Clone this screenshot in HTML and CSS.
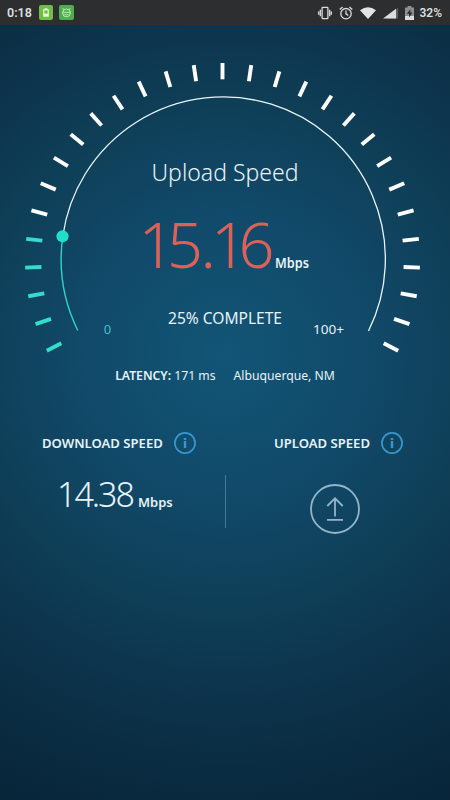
FILE: index.html
```
<!DOCTYPE html>
<html lang="en">

<head>
    <meta charset="UTF-8">
    <meta name="viewport" content="width=device-width, initial-scale=1.0">
    <link rel="stylesheet" href="styles.css">
    <title>Speed Test</title>
</head>

<body>
    <div class="container">
        <header class="status-bar">
            <span class="clock">0:18</span>
            <svg class="badge" width="14" height="15" viewBox="0 0 14 15">
                <rect width="14" height="15" rx="2" fill="#70bf45" />
                <path d="M4.2 4.2h1.5v-1h2.6v1h1.5v7.5H4.2z" fill="#e9f8dc" />
                <rect x="5.4" y="5.4" width="3.2" height="3.2" fill="#70bf45" />
            </svg>
            <svg class="badge" width="15" height="15" viewBox="0 0 15 15">
                <rect width="15" height="15" rx="2" fill="#4cae4c" />
                <g fill="none" stroke="#c4eeb8" stroke-width="1">
                    <path d="M4.8 4.8L3.8 3.2M10.2 4.8l1-1.6" />
                    <circle cx="7.5" cy="7.9" r="3.9" />
                    <path d="M4 7.3h7M5.5 9.3q2 1.2 4 0" />
                </g>
            </svg>
            <div class="status-icons">
                <svg width="14" height="14" viewBox="0 0 14 14" fill="none" stroke="#dcdcdc" stroke-width="1.3">
                    <rect x="4.1" y="1.4" width="5.8" height="11.2" rx=".6" />
                    <path d="M2.3 3.8v6.4M11.7 3.8v6.4M.6 5.4v3.4M13.4 5.4v3.4" />
                </svg>
                <svg width="14" height="14" viewBox="0 0 14 14" fill="none" stroke="#dcdcdc" stroke-width="1.3">
                    <circle cx="7" cy="7.7" r="5.2" />
                    <path d="M7 4.6v3.3l2.3 1.5M.7 3.6L3.6 1M13.3 3.6L10.4 1" />
                </svg>
                <svg width="16" height="12" viewBox="0 0 16 12">
                    <path d="M0 3.3Q8-2.7 16 3.3L8 12z" fill="#e4e4e4" />
                </svg>
                <svg width="15" height="12" viewBox="0 0 15 12">
                    <path d="M15 .5V11.5H4z" fill="#5d5f60" />
                    <path d="M13 1.8V11.5H0z" fill="#dcdcdc" />
                </svg>
                <svg width="9" height="14" viewBox="0 0 9 14">
                    <path d="M0 1.5h2.5V0h4v1.5H9V10H0z" fill="#8d8f90" />
                    <path d="M0 10h9v4H0z" fill="#dcdcdc" />
                    <path d="M5.5 3L1.8 7.8h2.3v3.6l3.5-4.8H5.3z" fill="#2a2c2e" />
                </svg>
                <span class="battery">32%</span>
            </div>
        </header>

        <svg class="gauge" viewBox="0 25 450 335">
            <g id="ticks"></g>
            <path class="track" d="M62.8 236A162.1 162.1 0 1 1 368.5 331" />
            <path class="track done" d="M77.8 330.5A162.1 162.1 0 0 1 62.8 236" />
            <circle class="dot" cx="62.5" cy="236.3" r="6.1" />
            <text class="title" x="151.5" y="181" textLength="147" lengthAdjust="spacingAndGlyphs">Upload Speed</text>
            <text class="speed" x="138.5 167 200.5 211 238.5" y="268">15.16</text>
            <text class="unit" x="275" y="268" textLength="34" lengthAdjust="spacingAndGlyphs">Mbps</text>
            <text class="progress" x="168" y="324" textLength="114" lengthAdjust="spacingAndGlyphs">25% COMPLETE</text>
            <text class="limit low" x="103.7" y="334">0</text>
            <text class="limit" x="313" y="334" textLength="31" lengthAdjust="spacingAndGlyphs">100+</text>
        </svg>

        <div class="details">
            <span><b>LATENCY:</b> 171 ms</span>
            <span class="place">Albuquerque, NM</span>
        </div>

        <div class="results">
            <section class="result download">
                <h2>
                    <span>DOWNLOAD SPEED</span>
                    <svg class="info" width="22" height="22" viewBox="0 0 22 22">
                        <circle cx="11" cy="11" r="10.1" />
                        <path class="stem" d="M11 9v7M11 5.9v2" />
                    </svg>
                </h2>
                <div class="value"><span class="number">14.38</span><span class="mbps">Mbps</span></div>
            </section>
            <div class="divider"></div>
            <section class="result upload">
                <h2>
                    <span>UPLOAD SPEED</span>
                    <svg class="info" width="22" height="22" viewBox="0 0 22 22">
                        <circle cx="11" cy="11" r="10.1" />
                        <path class="stem" d="M11 9v7M11 5.9v2" />
                    </svg>
                </h2>
                <svg class="arrow" width="50" height="50" viewBox="0 0 50 50">
                    <circle cx="25" cy="25" r="24" />
                    <path d="M25 32.5V14.5M17.3 22L25 14.3l7.7 7.7M17 35.8h16" />
                </svg>
            </section>
        </div>
    </div>

    <script>
        const ticks = document.querySelector('#ticks');

        // 29 ticks, 14 on each side of the top one
        for (let i = -14; i <= 14; i++) {
            const tick = document.createElementNS('http://www.w3.org/2000/svg', 'line');
            tick.setAttribute('x1', 222.5);
            tick.setAttribute('x2', 222.5);
            tick.setAttribute('y1', 63);
            tick.setAttribute('y2', 79.3);
            tick.setAttribute('transform', `rotate(${i * 8.37} 222.5 260.5)`);
            tick.setAttribute('class', i < -9 ? 'tick done' : 'tick');
            ticks.appendChild(tick);
        }
    </script>
</body>

</html>
```

FILE: styles.css
```
* {
    margin: 0;
    padding: 0;
    box-sizing: border-box;
}

body {
    font-family: 'Noto Sans', 'Open Sans', sans-serif;
    color: #e6f3f7;
}

.container {
    height: 800px;
    width: 450px;
    overflow: hidden;
    background: radial-gradient(ellipse 520px 520px at 225px 355px, #125576 0%, #114969 28%, #0f4059 46%, #0d354d 63%, #0a2b40 82%, #072337 100%);
}

.status-bar {
    height: 25px;
    padding: 0 8px 0 7px;
    display: flex;
    align-items: center;
    background: #2c2e30;
    color: #dedede;
    font-family: Roboto, sans-serif;
    font-size: 12.5px;
    font-weight: 600;
}

.clock {
    width: 32px;
}

.badge {
    margin-right: 6px;
}

.status-icons {
    margin-left: auto;
    display: flex;
    align-items: center;
    gap: 7px;
}

.battery {
    margin-left: -2px;
    font-size: 12px;
}

.gauge {
    display: block;
    width: 450px;
    height: 335px;
}

.tick {
    stroke: #fff;
    stroke-width: 3.9;
}

.tick.done {
    stroke: #35dccb;
}

.track {
    fill: none;
    stroke: #e8f6fa;
    stroke-width: 1.3;
}

.track.done {
    stroke: #35d3c6;
    stroke-width: 1.4;
}

.dot {
    fill: #20dfc9;
}

.gauge text {
    fill: #e6f3f7;
}

.gauge .title {
    font-size: 24px;
    font-weight: 300;
}

.gauge .speed {
    font-size: 63px;
    font-weight: 300;
    fill: #dc6259;
}

.gauge .unit {
    font-size: 13.5px;
    font-weight: 600;
}

.gauge .progress {
    font-size: 15.5px;
}

.gauge .limit {
    font-size: 13px;
    font-weight: 400;
}

.gauge .low {
    fill: #49b9cb;
}

.details {
    height: 30px;
    display: flex;
    justify-content: center;
    align-items: center;
    gap: 18px;
    font-size: 12.2px;
}

.details b {
    font-weight: 600;
}

.results {
    padding-top: 41px;
    display: grid;
    grid-template-columns: 225px 1px 224px;
}

.result h2 {
    height: 24px;
    display: flex;
    align-items: center;
    gap: 11px;
    font-size: 13.1px;
    font-weight: 600;
}

.download {
    padding-left: 42px;
}

.upload {
    padding-left: 48px;
}

.info {
    fill: none;
    stroke: #3896cf;
    stroke-width: 1.7;
}

.info .stem {
    stroke-width: 2.4;
}

.value {
    padding: 16px 0 0 15px;
    display: flex;
    align-items: baseline;
}

.number {
    width: 81px;
    font-size: 34px;
    font-weight: 300;
    line-height: 46px;
    letter-spacing: -2px;
}

.mbps {
    font-size: 13px;
    font-weight: 600;
}

.divider {
    height: 53px;
    margin-top: 44px;
    background: #477b91;
}

.arrow {
    display: block;
    margin: 29px 0 0 36px;
    fill: none;
    stroke: #91b5c9;
    stroke-width: 1.8;
}
```
